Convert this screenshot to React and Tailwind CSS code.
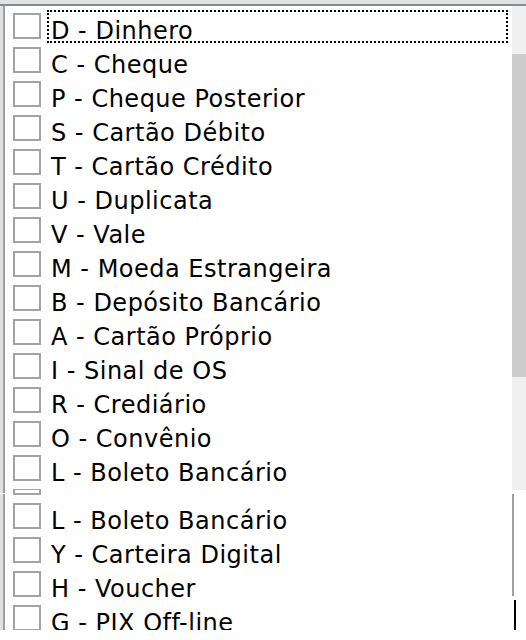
import React from 'react';

const topItems = [
  'D - Dinhero',
  'C - Cheque',
  'P - Cheque Posterior',
  'S - Cartão Débito',
  'T - Cartão Crédito',
  'U - Duplicata',
  'V - Vale',
  'M - Moeda Estrangeira',
  'B - Depósito Bancário',
  'A - Cartão Próprio',
  'I - Sinal de OS',
  'R - Crediário',
  'O - Convênio',
  'L - Boleto Bancário',
  'Y - Carteira Digital',
];

const bottomItems = ['L - Boleto Bancário', 'Y - Carteira Digital', 'H - Voucher', 'G - PIX Off-line'];

const Row = ({ label, focused }) => (
  <div className="flex h-[34px] shrink-0">
    <div className="ml-[8px] mt-[4px] h-[26px] w-[28px] shrink-0 border-2 border-[#a3a3a3] bg-white" />
    <div
      className={`ml-[6px] mr-[4px] mt-[1px] h-[33px] flex-1 whitespace-nowrap border-2 pl-[2px] pt-[7px] text-[24px] leading-[24px] tracking-[0.5px] text-black ${
        focused ? 'border-dotted border-black' : 'border-transparent'
      }`}
    >
      {label}
    </div>
  </div>
);

export default function App() {
  return (
    <div className="flex h-[640px] w-[526px] flex-col overflow-hidden bg-white font-['DejaVu_Sans',sans-serif]">
      {/* upper list, scrolled to the top */}
      <div className="flex h-[490px] shrink-0 flex-col">
        <div className="h-[4px] bg-[#e1e1e1]" />
        <div className="h-[2px] bg-[#858b96]" />
        <div className="flex min-h-0 flex-1">
          <div className="w-[3px] bg-[#e1e1e1]" />
          <div className="w-[2px] bg-[#a0a0a0]" />
          <div className="flex min-w-0 flex-1 flex-col overflow-hidden bg-white pt-[3px]">
            {topItems.map((item, i) => (
              <Row key={item + i} label={item} focused={i === 0} />
            ))}
          </div>
          <div className="flex w-[14px] shrink-0 flex-col bg-[#f0f0f0]">
            <div className="h-[48px]" />
            <div className="h-[323px] bg-[#cdcdcd]" />
          </div>
        </div>
      </div>

      {/* lower list, scrolled to the end */}
      <div className="flex h-[140px] shrink-0">
        <div className="flex w-[3px] flex-col">
          <div className="h-[3px] bg-[#e1e1e1]" />
          <div className="h-[1px] bg-white" />
          <div className="flex-1 bg-[#e1e1e1]" />
        </div>
        <div className="flex w-[2px] flex-col">
          <div className="h-[3px] bg-[#a0a0a0]" />
          <div className="h-[1px] bg-white" />
          <div className="flex-1 bg-[#a0a0a0]" />
        </div>
        <div className="flex min-w-0 flex-1 flex-col overflow-hidden bg-white">
          <div className="-mt-[25px] flex flex-col">
            <div className="flex h-[34px] shrink-0">
              <div className="ml-[8px] mt-[4px] h-[26px] w-[28px] shrink-0 border-2 border-[#a3a3a3] bg-white" />
            </div>
            {bottomItems.map((item) => (
              <Row key={item} label={item} />
            ))}
          </div>
        </div>
        <div className="flex w-[14px] shrink-0 flex-col">
          <div className="h-[4px]" />
          <div className="h-[102px] w-[2px] bg-[#a0a0a0]" />
          <div className="h-[4px]" />
          <div className="ml-[2px] h-[30px] w-[2px] bg-black" />
        </div>
      </div>
    </div>
  );
}
